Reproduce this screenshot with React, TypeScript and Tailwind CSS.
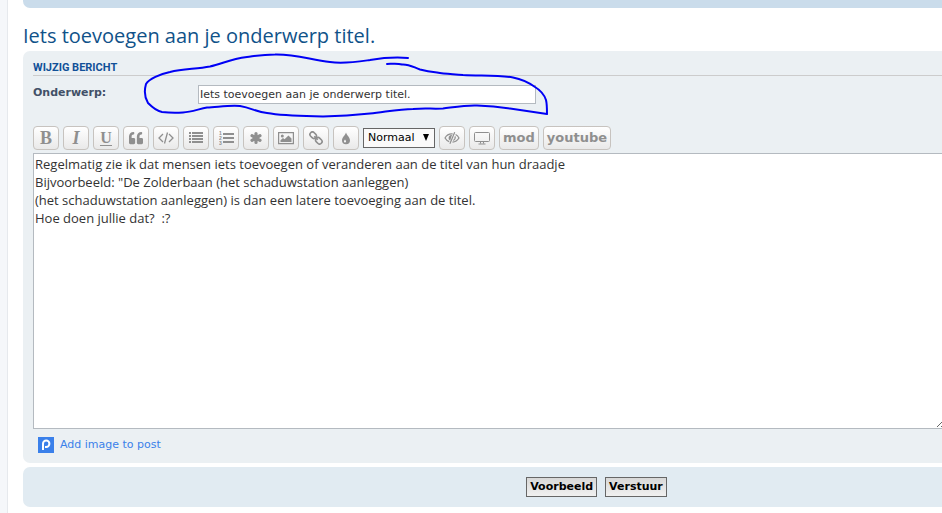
import type { ReactNode } from 'react';
import { FaQuoteLeft } from 'react-icons/fa';

const MESSAGE = `Regelmatig zie ik dat mensen iets toevoegen of veranderen aan de titel van hun draadje
Bijvoorbeeld: "De Zolderbaan (het schaduwstation aanleggen)
(het schaduwstation aanleggen) is dan een latere toevoeging aan de titel.
Hoe doen jullie dat?  :?`;

function CodeIcon() {
  return (
    <svg width="16" height="14" viewBox="0 0 16 14" fill="none" stroke="currentColor" strokeWidth="1.3">
      <path d="M5 3 1 7l4 4M11 3l4 4-4 4M9.5 1.5l-3 11" />
    </svg>
  );
}

function ListIcon() {
  return (
    <svg width="14" height="12" viewBox="0 0 14 12" fill="currentColor">
      <path d="M0 0h2v2H0zM0 3h2v2H0zM0 6h2v2H0zM0 9h2v2H0zM3 0h11v2H3zM3 3h11v2H3zM3 6h11v2H3zM3 9h11v2H3z" />
    </svg>
  );
}

function OrderedListIcon() {
  return (
    <svg width="15" height="14" viewBox="0 0 15 14" fill="currentColor">
      <path d="M4 2h11v2H4zM4 6h11v2H4zM4 10h11v2H4z" />
      <g className="font-['Liberation_Sans',Arial,sans-serif] text-[5px] font-bold">
        <text x="0" y="4">1</text>
        <text x="0" y="9">2</text>
        <text x="0" y="14">3</text>
      </g>
    </svg>
  );
}

function AsteriskIcon() {
  return (
    <svg width="12" height="12" viewBox="0 0 12 12" stroke="currentColor" strokeWidth="3.2" strokeLinecap="round">
      <path d="M6 1.600v8.800M2 3.700l8 4.600M10 3.700 2 8.300" />
    </svg>
  );
}

function ImageIcon() {
  return (
    <svg width="16" height="14" viewBox="0 0 16 14" fill="currentColor">
      <path d="M.6 1.600h14.800v11H.6z" fill="none" stroke="currentColor" strokeWidth="1.200" />
      <circle cx="4.300" cy="5" r="1.500" />
      <path d="M2.500 11V9.300L5 7l1.500 1.300L10.500 4.500l3 3V11z" />
    </svg>
  );
}

function LinkIcon() {
  return (
    <svg width="14" height="14" viewBox="0 0 14 14" fill="none" stroke="currentColor" strokeWidth="1.600">
      <g transform="rotate(45 7 7)">
        <rect x="-0.500" y="4.500" width="7" height="5" rx="2.500" />
        <rect x="7.500" y="4.500" width="7" height="5" rx="2.500" />
        <path d="M4.500 7h5" />
      </g>
    </svg>
  );
}

function DropIcon() {
  return (
    <svg width="10" height="13" viewBox="0 0 10 13" fill="currentColor">
      <path d="M5 .5C5.800 3.400 9 5.300 9 8.300a4 4 0 0 1-8 0C1 5.300 4.200 3.400 5 .5z" />
      <path d="M4 7.500C3.400 8.300 2.900 8.900 2.900 9.500a1.100 1.100 0 0 0 2.200 0C5.100 8.900 4.500 8.300 4 7.500z" fill="#f4f4f4" />
    </svg>
  );
}

function SpoilerIcon() {
  return (
    <svg width="16" height="14" viewBox="0 0 16 14" fill="none" stroke="currentColor" strokeWidth="1.2">
      <path d="M8.800 3C5.500 2.600 2.500 4.400 1 7c.9 1.600 2.300 2.900 4.200 3.600" />
      <path d="M8 4.100C5.200 3.900 4 6.300 4.900 8.600l1.300 1z" fill="currentColor" stroke="none" />
      <path d="M10.700 1.300 5.900 12.700M11.600 3.600C13 4.400 14.200 5.600 15 7c-1.400 2.300-3.700 4-6.500 4.200M11.200 5.400C11.400 7.200 10.700 8.700 9.300 9.500" />
    </svg>
  );
}

function DesktopIcon() {
  return (
    <svg width="16" height="14" viewBox="0 0 16 14" fill="none" stroke="currentColor">
      <rect x="0.5" y="1.5" width="15" height="9" rx="1" />
      <path d="M6.500 10.500v2M9.500 10.500v2M4.500 13h7" />
    </svg>
  );
}

interface ToolButtonProps {
  label: string;
  wide?: boolean;
  children: ReactNode;
}

function ToolButton({ label, wide = false, children }: ToolButtonProps) {
  return (
    <button
      type="button"
      aria-label={label}
      className={
        wide
          ? 'flex h-6 items-center rounded border border-[#c7c3bf] bg-linear-to-b from-white to-[#e9e9e9] px-[3px] text-[13px] font-bold text-[#8f8f8f]'
          : "flex h-6 w-[26px] items-center justify-center rounded border border-[#c7c3bf] bg-linear-to-b from-white to-[#e9e9e9] font-['Liberation_Serif','Times_New_Roman',serif] text-[18px] leading-5 font-bold text-[#8f8f8f]"
      }
    >
      {children}
    </button>
  );
}

function Toolbar() {
  return (
    <div className="flex items-center gap-1">
      <ToolButton label="Vet">B</ToolButton>
      <ToolButton label="Cursief"><i>I</i></ToolButton>
      <ToolButton label="Onderstreept">
        <span className="border-b border-current text-[16px] leading-[14px]">U</span>
      </ToolButton>
      <ToolButton label="Citaat"><FaQuoteLeft className="size-[14px]" /></ToolButton>
      <ToolButton label="Code"><CodeIcon /></ToolButton>
      <ToolButton label="Lijst"><ListIcon /></ToolButton>
      <ToolButton label="Genummerde lijst"><OrderedListIcon /></ToolButton>
      <ToolButton label="Lijstitem"><AsteriskIcon /></ToolButton>
      <ToolButton label="Afbeelding"><ImageIcon /></ToolButton>
      <ToolButton label="Link"><LinkIcon /></ToolButton>
      <ToolButton label="Kleur"><DropIcon /></ToolButton>
      <div className="relative">
        <select
          aria-label="Lettergrootte"
          className="block h-5 w-[72px] appearance-none border border-[#666] bg-[#fafafa] pl-1 text-[11px] text-black"
        >
          <option>Normaal</option>
        </select>
        <svg className="pointer-events-none absolute top-[6px] right-[6px]" width="6" height="7" viewBox="0 0 6 7">
          <path d="M0 0h6L3 7z" />
        </svg>
      </div>
      <ToolButton label="Spoiler"><SpoilerIcon /></ToolButton>
      <ToolButton label="Scherm"><DesktopIcon /></ToolButton>
      <ToolButton label="mod" wide>mod</ToolButton>
      <ToolButton label="youtube" wide>youtube</ToolButton>
    </div>
  );
}

// Hand-drawn loop around the subject field
function PenLoop() {
  return (
    <svg
      className="pointer-events-none absolute top-0 left-[117px]"
      width="412"
      height="68"
      viewBox="140 51 412 68"
      fill="none"
      stroke="#0000f5"
      strokeWidth="2"
      strokeLinecap="round"
      strokeLinejoin="round"
    >
      <path d="M408 58C396 57 382 58 370 60C356 62 344 64 330 62C311 60 296 54 275 54.500C262 54.500 255 56 247 57C230 59 222 64 210 66.500C196 69 183 69 170 72C160 74 149 79 146 84C144 91 145 98 148 103C152 107 156 111 162 112C170 113 176 113 183 112.500C191 112 199 109 207 107.500C218 107 230 105 240 106C252 108 256 112 267 113C284 116 305 116 323 116.500C340 116 355 115 370 113.500C385 112 399 109 413 109C423 108 433 109 443 108.500C455 107 466 105 477 105.500C488 106 499 107 510 108.500L547 114C547 109 547 104 546 100C544 94 540 90 535 87C528 82 521 79 513 77.500C497 75 480 76 463 75C453 74 445 74 437 72.500C431 72 425 71 420 69.500C413 67 409 64 402 64.500C397 63 391 64 387 64" />
    </svg>
  );
}

export default function App() {
  return (
    <div className="flex min-h-screen overflow-hidden bg-[#f5f7fa] pl-[7px] font-['DejaVu_Sans',Verdana,sans-serif] text-[11px] text-[#333]">
      <div className="min-w-0 flex-1 border-l border-[#e6e9ed] bg-white pl-[15px]">
        {/* The forum column runs on past the right edge of the window */}
        <div className="-mr-[228px]">
          <div className="h-2 rounded-b-[7px] bg-[#cadceb]" />

          <h2 className="mt-4 mb-[3px] font-['Open_Sans','Trebuchet_MS',sans-serif] text-[20px] leading-6 text-[#105289]">
            Iets toevoegen aan je onderwerp titel.
          </h2>

          <form onSubmit={(e) => e.preventDefault()}>
            <div className="relative rounded-[7px] bg-[#ebf0f3] px-[10px] pt-[9px] pb-[10px]">
              <h3 className="border-b border-[#ccc] font-[Roboto,Arial,sans-serif] text-[11px] leading-[15px] font-bold text-[#115098] uppercase">
                Wijzig bericht
              </h3>

              <div className="flex pt-[9px]">
                <label htmlFor="subject" className="w-[165px] leading-4 font-bold text-[#425067]">
                  Onderwerp:
                </label>
                <input
                  id="subject"
                  type="text"
                  defaultValue="Iets toevoegen aan je onderwerp titel."
                  className="h-[19px] w-[30%] border border-[#b4bac0] bg-white px-px text-[11px]"
                />
              </div>

              <div className="pt-[22px] pr-[214px]">
                <Toolbar />
                <textarea
                  aria-label="Bericht"
                  defaultValue={MESSAGE}
                  className="mt-[3px] block h-[276px] w-full border border-[#b4bac0] bg-white px-px py-px font-['Open_Sans','Trebuchet_MS',sans-serif] text-[13px] leading-[18px] text-[#333]"
                />
              </div>

              <div className="flex pt-2 pl-[5px]">
                <a href="#" className="flex items-center gap-[6px] leading-4 text-[#3a80ea]">
                  <svg width="16" height="16" viewBox="0 0 16 16" fill="none">
                    <path fill="#3a80ea" d="M0 0h16v16H0z" />
                    <path stroke="#fff" strokeWidth="2" d="M5 13V6.800a3.200 3.200 0 1 1 3.200 3.200H7" />
                  </svg>
                  Add image to post
                </a>
              </div>

              <PenLoop />
            </div>

            <div className="mt-1 flex justify-center gap-2 rounded-[7px] bg-[#e1ebf2] py-[10px]">
              <button
                type="button"
                className="h-5 border border-[#666] bg-linear-to-b from-[#d8d8d8] to-[#f0f0f0] px-[3px] text-[11px] leading-4 font-bold text-black"
              >
                Voorbeeld
              </button>
              <button
                type="submit"
                className="h-5 border border-[#666] bg-linear-to-b from-[#d8d8d8] to-[#f0f0f0] px-[3px] text-[11px] leading-4 font-bold text-black"
              >
                Verstuur
              </button>
            </div>
          </form>
        </div>
      </div>
    </div>
  );
}
